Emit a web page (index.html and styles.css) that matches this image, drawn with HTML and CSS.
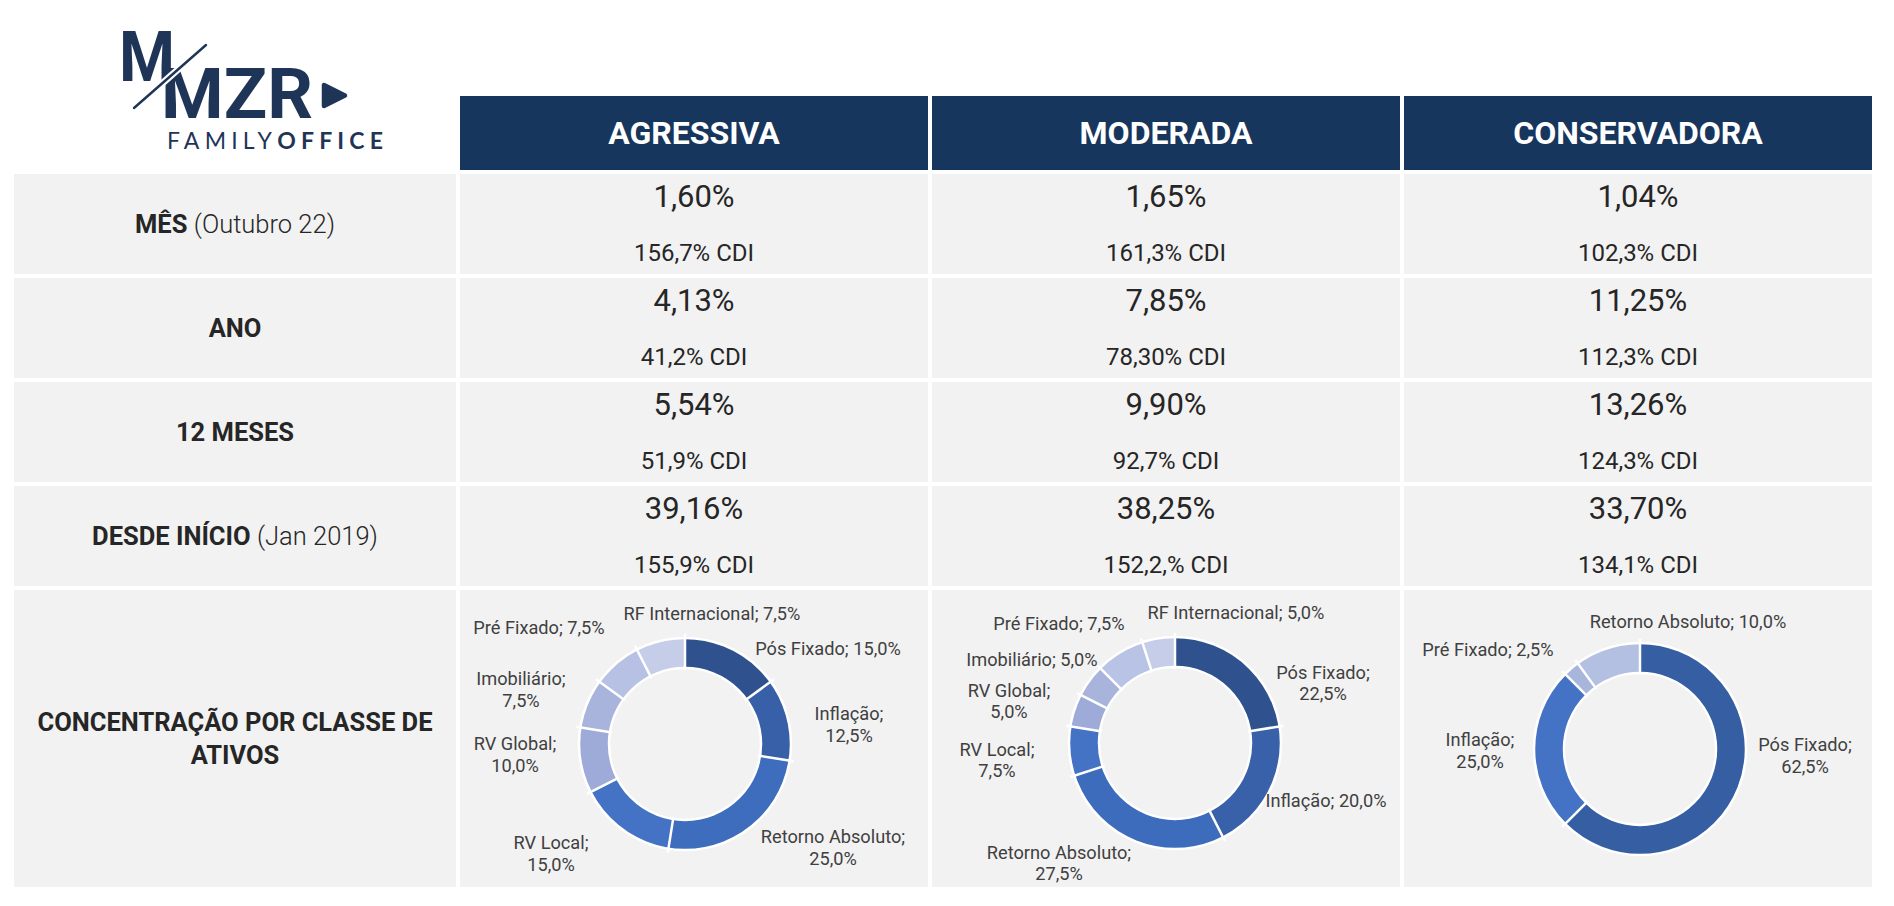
FILE: index.html
```html
<!DOCTYPE html>
<html lang="pt-BR">
<head>
<meta charset="utf-8">
<title>MZR Family Office - Carteiras</title>
<link rel="stylesheet" href="styles.css">
</head>
<body>
<div class="board">
  <div class="brand">
    <svg class="logo" width="442" height="170" viewBox="14 0 442 170">
      <text class="lg-big" x="119" y="81" textLength="56" lengthAdjust="spacingAndGlyphs">M</text>
      <text class="lg-big" x="161" y="118" textLength="152" lengthAdjust="spacingAndGlyphs">MZR</text>
      <line x1="130" y1="112" x2="210" y2="41" stroke="#ffffff" stroke-width="7"/>
      <line x1="134" y1="108" x2="206" y2="45" stroke="#1f3557" stroke-width="2.4" stroke-linecap="round"/>
      <polygon points="324,85 324,106 345,95.5" fill="#1f3557" stroke="#1f3557" stroke-width="4.5" stroke-linejoin="round"/>
      <text class="lg-small" x="167" y="149" textLength="216" lengthAdjust="spacing"><tspan class="lg-thin">FAMILY</tspan><tspan class="lg-bold">OFFICE</tspan></text>
    </svg>
  </div>
  <div class="head">AGRESSIVA</div>
  <div class="head">MODERADA</div>
  <div class="head">CONSERVADORA</div>

  <div class="label"><span>MÊS <span class="note">(Outubro 22)</span></span></div>
  <div class="val"><div class="pct">1,60%</div><div class="cdi">156,7% CDI</div></div>
  <div class="val"><div class="pct">1,65%</div><div class="cdi">161,3% CDI</div></div>
  <div class="val"><div class="pct">1,04%</div><div class="cdi">102,3% CDI</div></div>

  <div class="label"><span>ANO</span></div>
  <div class="val"><div class="pct">4,13%</div><div class="cdi">41,2% CDI</div></div>
  <div class="val"><div class="pct">7,85%</div><div class="cdi">78,30% CDI</div></div>
  <div class="val"><div class="pct">11,25%</div><div class="cdi">112,3% CDI</div></div>

  <div class="label"><span>12 MESES</span></div>
  <div class="val"><div class="pct">5,54%</div><div class="cdi">51,9% CDI</div></div>
  <div class="val"><div class="pct">9,90%</div><div class="cdi">92,7% CDI</div></div>
  <div class="val"><div class="pct">13,26%</div><div class="cdi">124,3% CDI</div></div>

  <div class="label"><span>DESDE INÍCIO <span class="note">(Jan 2019)</span></span></div>
  <div class="val"><div class="pct">39,16%</div><div class="cdi">155,9% CDI</div></div>
  <div class="val"><div class="pct">38,25%</div><div class="cdi">152,2,% CDI</div></div>
  <div class="val"><div class="pct">33,70%</div><div class="cdi">134,1% CDI</div></div>

  <div class="label label-wide"><span>CONCENTRAÇÃO POR CLASSE DE ATIVOS</span></div>

  <div class="chart">
    <svg width="468" height="297" viewBox="0 0 468 297">
      <g transform="rotate(-90 225 154)" fill="none" stroke-width="30">
        <circle cx="225" cy="154" r="91" pathLength="100" stroke="#2f528f" stroke-dasharray="15 85" stroke-dashoffset="0"/>
        <circle cx="225" cy="154" r="91" pathLength="100" stroke="#3760a9" stroke-dasharray="12.5 87.5" stroke-dashoffset="-15"/>
        <circle cx="225" cy="154" r="91" pathLength="100" stroke="#3e6dbd" stroke-dasharray="25 75" stroke-dashoffset="-27.5"/>
        <circle cx="225" cy="154" r="91" pathLength="100" stroke="#4472c4" stroke-dasharray="15 85" stroke-dashoffset="-52.5"/>
        <circle cx="225" cy="154" r="91" pathLength="100" stroke="#9eaad8" stroke-dasharray="10 90" stroke-dashoffset="-67.5"/>
        <circle cx="225" cy="154" r="91" pathLength="100" stroke="#a8b4dc" stroke-dasharray="7.5 92.5" stroke-dashoffset="-77.5"/>
        <circle cx="225" cy="154" r="91" pathLength="100" stroke="#b6c1e3" stroke-dasharray="7.5 92.5" stroke-dashoffset="-85"/>
        <circle cx="225" cy="154" r="91" pathLength="100" stroke="#c5cde8" stroke-dasharray="7.5 92.5" stroke-dashoffset="-92.5"/>
      </g>
      <g class="sep">
        <circle cx="225" cy="154" r="106" fill="none"/>
        <circle cx="225" cy="154" r="76" fill="none"/>
        <line x1="225" y1="80" x2="225" y2="44" transform="rotate(0 225 154)"/>
        <line x1="225" y1="80" x2="225" y2="44" transform="rotate(54 225 154)"/>
        <line x1="225" y1="80" x2="225" y2="44" transform="rotate(99 225 154)"/>
        <line x1="225" y1="80" x2="225" y2="44" transform="rotate(189 225 154)"/>
        <line x1="225" y1="80" x2="225" y2="44" transform="rotate(243 225 154)"/>
        <line x1="225" y1="80" x2="225" y2="44" transform="rotate(279 225 154)"/>
        <line x1="225" y1="80" x2="225" y2="44" transform="rotate(306 225 154)"/>
        <line x1="225" y1="80" x2="225" y2="44" transform="rotate(333 225 154)"/>
      </g>
      <text x="252" y="30">RF Internacional; 7,5%</text>
      <text x="79" y="44">Pré Fixado; 7,5%</text>
      <text x="368" y="65">Pós Fixado; 15,0%</text>
      <text x="61" y="95">Imobiliário;</text><text x="61" y="117">7,5%</text>
      <text x="389" y="130">Inflação;</text><text x="389" y="152">12,5%</text>
      <text x="55" y="160">RV Global;</text><text x="55" y="182">10,0%</text>
      <text x="91" y="259">RV Local;</text><text x="91" y="281">15,0%</text>
      <text x="373" y="253">Retorno Absoluto;</text><text x="373" y="275">25,0%</text>
    </svg>
  </div>

  <div class="chart">
    <svg width="468" height="297" viewBox="0 0 468 297">
      <g transform="rotate(-90 243 153)" fill="none" stroke-width="30">
        <circle cx="243" cy="153" r="91" pathLength="100" stroke="#2f528f" stroke-dasharray="22.5 77.5" stroke-dashoffset="0"/>
        <circle cx="243" cy="153" r="91" pathLength="100" stroke="#3961a9" stroke-dasharray="20 80" stroke-dashoffset="-22.5"/>
        <circle cx="243" cy="153" r="91" pathLength="100" stroke="#3e6cbc" stroke-dasharray="27.5 72.5" stroke-dashoffset="-42.5"/>
        <circle cx="243" cy="153" r="91" pathLength="100" stroke="#4472c4" stroke-dasharray="7.5 92.5" stroke-dashoffset="-70"/>
        <circle cx="243" cy="153" r="91" pathLength="100" stroke="#9eabd9" stroke-dasharray="5 95" stroke-dashoffset="-77.5"/>
        <circle cx="243" cy="153" r="91" pathLength="100" stroke="#a8b4dc" stroke-dasharray="5 95" stroke-dashoffset="-82.5"/>
        <circle cx="243" cy="153" r="91" pathLength="100" stroke="#b8c3e5" stroke-dasharray="7.5 92.5" stroke-dashoffset="-87.5"/>
        <circle cx="243" cy="153" r="91" pathLength="100" stroke="#c5cde8" stroke-dasharray="5 95" stroke-dashoffset="-95"/>
      </g>
      <g class="sep">
        <circle cx="243" cy="153" r="106" fill="none"/>
        <circle cx="243" cy="153" r="76" fill="none"/>
        <line x1="243" y1="79" x2="243" y2="43" transform="rotate(0 243 153)"/>
        <line x1="243" y1="79" x2="243" y2="43" transform="rotate(81 243 153)"/>
        <line x1="243" y1="79" x2="243" y2="43" transform="rotate(153 243 153)"/>
        <line x1="243" y1="79" x2="243" y2="43" transform="rotate(252 243 153)"/>
        <line x1="243" y1="79" x2="243" y2="43" transform="rotate(279 243 153)"/>
        <line x1="243" y1="79" x2="243" y2="43" transform="rotate(297 243 153)"/>
        <line x1="243" y1="79" x2="243" y2="43" transform="rotate(315 243 153)"/>
        <line x1="243" y1="79" x2="243" y2="43" transform="rotate(342 243 153)"/>
      </g>
      <text x="304" y="29">RF Internacional; 5,0%</text>
      <text x="127" y="40">Pré Fixado; 7,5%</text>
      <text x="100" y="76">Imobiliário; 5,0%</text>
      <text x="391" y="89">Pós Fixado;</text><text x="391" y="110">22,5%</text>
      <text x="77" y="107">RV Global;</text><text x="77" y="128">5,0%</text>
      <text x="65" y="166">RV Local;</text><text x="65" y="187">7,5%</text>
      <text x="394" y="217">Inflação; 20,0%</text>
      <text x="127" y="269">Retorno Absoluto;</text><text x="127" y="290">27,5%</text>
    </svg>
  </div>

  <div class="chart">
    <svg width="468" height="297" viewBox="0 0 468 297">
      <g transform="rotate(-90 236 159)" fill="none" stroke-width="30">
        <circle cx="236" cy="159" r="91" pathLength="100" stroke="#365fa3" stroke-dasharray="62.5 37.5" stroke-dashoffset="0"/>
        <circle cx="236" cy="159" r="91" pathLength="100" stroke="#4472c4" stroke-dasharray="25 75" stroke-dashoffset="-62.5"/>
        <circle cx="236" cy="159" r="91" pathLength="100" stroke="#a9b6dc" stroke-dasharray="2.5 97.5" stroke-dashoffset="-87.5"/>
        <circle cx="236" cy="159" r="91" pathLength="100" stroke="#b4c0e2" stroke-dasharray="10 90" stroke-dashoffset="-90"/>
      </g>
      <g class="sep">
        <circle cx="236" cy="159" r="106" fill="none"/>
        <circle cx="236" cy="159" r="76" fill="none"/>
        <line x1="236" y1="85" x2="236" y2="49" transform="rotate(0 236 159)"/>
        <line x1="236" y1="85" x2="236" y2="49" transform="rotate(225 236 159)"/>
        <line x1="236" y1="85" x2="236" y2="49" transform="rotate(315 236 159)"/>
        <line x1="236" y1="85" x2="236" y2="49" transform="rotate(324 236 159)"/>
      </g>
      <text x="284" y="38">Retorno Absoluto; 10,0%</text>
      <text x="84" y="66">Pré Fixado; 2,5%</text>
      <text x="76" y="156">Inflação;</text><text x="76" y="178">25,0%</text>
      <text x="401" y="161">Pós Fixado;</text><text x="401" y="183">62,5%</text>
    </svg>
  </div>
</div>
</body>
</html>
```
FILE: styles.css
```css
html, body {
  margin: 0;
  padding: 0;
  background: #ffffff;
}

body {
  font-family: Roboto, "Liberation Sans", Arial, sans-serif;
  color: #262626;
}

.board {
  display: grid;
  grid-template-columns: 442px repeat(3, 468px);
  grid-template-rows: 170px repeat(4, 100px) 297px;
  gap: 4px;
  padding-left: 14px;
}

.brand {
  height: 170px;
}

.logo {
  display: block;
}

.lg-big {
  font-family: Roboto, "Liberation Sans", sans-serif;
  font-weight: 700;
  font-size: 70px;
  fill: #1f3557;
}

.lg-small {
  font-family: Lato, "Open Sans", sans-serif;
  font-size: 23px;
  fill: #1f3557;
}

.lg-thin {
  font-weight: 400;
}

.lg-bold {
  font-weight: 700;
}

.head {
  align-self: end;
  height: 74px;
  background: #17365d;
  color: #ffffff;
  display: flex;
  align-items: center;
  justify-content: center;
  font-weight: 700;
  font-size: 32px;
}

.label {
  background: #f2f2f2;
  display: flex;
  align-items: center;
  justify-content: center;
  text-align: center;
  font-size: 25.5px;
  font-weight: 700;
  line-height: 33px;
  padding: 0 20px;
}

.label .note {
  font-weight: 300;
}

.val {
  background: #f2f2f2;
  display: flex;
  flex-direction: column;
  align-items: center;
  padding-top: 3px;
}

.pct {
  font-size: 31px;
  line-height: 40px;
}

.cdi {
  font-size: 24px;
  line-height: 30px;
  margin-top: 21px;
}

.chart {
  background: #f2f2f2;
}

.chart svg {
  display: block;
}

.chart text {
  font-family: Roboto, "Liberation Sans", sans-serif;
  font-size: 18.2px;
  fill: #404040;
  text-anchor: middle;
}

.sep {
  stroke: #ffffff;
  stroke-width: 2.5;
}
```
